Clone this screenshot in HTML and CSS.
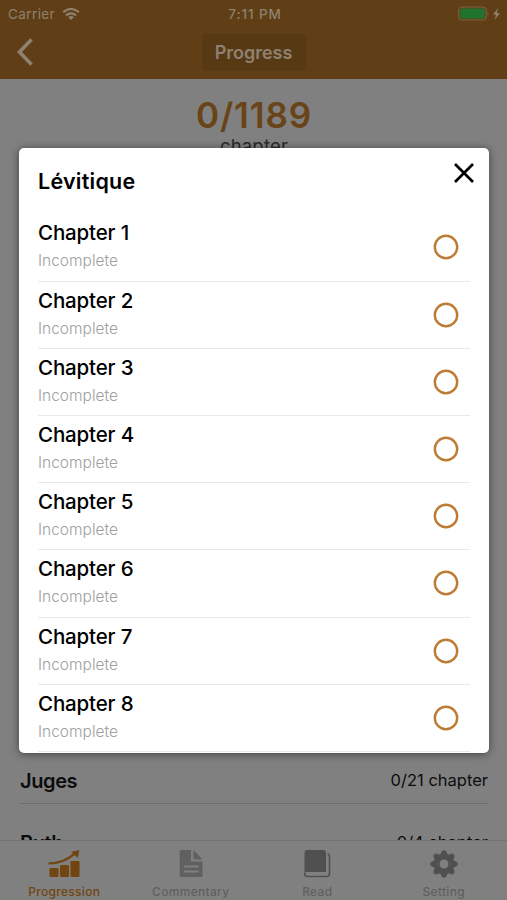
FILE: index.html
```html
<!DOCTYPE html>
<html lang="en">
<head>
<meta charset="utf-8">
<title>Progress</title>
<link rel="stylesheet" href="styles.css">
</head>
<body>
<div class="app">
  <header class="header">
    <div class="status">
      <div class="carrier"><span>Carrier</span>
        <svg width="18" height="14" viewBox="0 0 18 14" fill="none" stroke="currentColor" stroke-width="2.2"><path d="M1.2 5.2Q9-1.6 16.8 5.2M4 8.4q5-4.2 10 0"/><path d="M6.2 10.2q2.8-2.2 5.6 0L9 13z" fill="currentColor" stroke="none"/></svg>
      </div>
      <span class="clock">7:11 PM</span>
      <svg class="battery" width="44" height="16" viewBox="0 0 44 16"><rect x=".7" y="1" width="27.5" height="13" rx="3" fill="none" stroke="#7b6545"/><rect x="2.2" y="2.5" width="24.5" height="10" rx="1.5" fill="#20742f"/><path d="M29.5 5.5q2 2 0 4z" fill="#7b6545"/><path d="M40 2l-5 6.500h3l-1.200 5.200L42 6.900h-3.200z" fill="#8e8170"/></svg>
    </div>
    <div class="nav">
      <svg class="back" width="18" height="30" viewBox="0 0 18 30" fill="none" stroke="currentColor" stroke-width="3.6"><path d="M15.500 2.500L3.500 15l12 12.500"/></svg>
      <h1 class="nav-title">Progress</h1>
    </div>
  </header>
  <main class="page">
    <div class="total">0/1189</div>
    <div class="unit">chapter</div>
    <div class="books">
      <div class="book"><span class="book-name">Juges</span><span class="book-count">0/21 chapter</span></div>
      <div class="book"><span class="book-name">Ruth</span><span class="book-count">0/4 chapter</span></div>
    </div>
  </main>
  <nav class="tabs">
    <div class="tab active">
      <svg width="32" height="28" viewBox="0 0 32 28" fill="currentColor"><rect x="1.5" y="18" width="9" height="9" rx="1.2"/><rect x="12" y="15" width="9" height="12" rx="1.2"/><rect x="22.5" y="11" width="9" height="16" rx="1.2"/><path d="M.5 13.5Q15 13.5 26.5 3.8" fill="none" stroke="currentColor" stroke-width="2.2"/><path d="M23 2l8.300-2-1.500 8z"/></svg>
      <span>Progression</span>
    </div>
    <div class="tab">
      <svg width="24" height="28" viewBox="0 0 24 28"><path d="M1.700 0H12v11.500h11.500V26q0 1-1 1H1.700q-1 0-1-1V1q0-1 1-1z" fill="currentColor"/><path d="M14.500 0L23.500 9.500h-9z" fill="currentColor"/><path d="M5 16.500h14.500M5 21.500h14.500" stroke="#808080" stroke-width="2"/></svg>
      <span>Commentary</span>
    </div>
    <div class="tab dark">
      <svg width="28" height="28" viewBox="0 0 28 28"><path d="M4 0h16q3 0 3 3v19H4q-2.500 0-2.500 2V3q0-3 2.500-3z" fill="currentColor"/><path d="M24.500 4q2 0 2 2.500v17q0 3-3 3H4.500q-3 0-3-3.500" fill="none" stroke="currentColor" stroke-width="1.600"/></svg>
      <span>Read</span>
    </div>
    <div class="tab dark">
      <svg width="28" height="28" viewBox="-14 -14 28 28"><g fill="currentColor"><path id="cog" d="M-3.800-9l2-4.500h3.600l2 4.500v18l-2 4.500h-3.600l-2-4.500z"/><use href="#cog" transform="rotate(45)"/><use href="#cog" transform="rotate(90)"/><use href="#cog" transform="rotate(135)"/><circle r="10.500"/></g><circle r="4.500" fill="#808080"/></svg>
      <span>Setting</span>
    </div>
  </nav>
</div>
<section class="modal">
  <div class="modal-head">
    <h2>Lévitique</h2>
    <svg class="close" width="22" height="22" viewBox="0 0 22 22" fill="none" stroke="#000" stroke-width="2.700"><path d="M2 2l18 18M20 2L2 20"/></svg>
  </div>
  <ul class="chapters">
    <li><div><b>Chapter 1</b><small>Incomplete</small></div><svg class="ring" viewBox="0 0 26 26"><circle cx="13" cy="13" r="11.200"/></svg></li>
    <li><div><b>Chapter 2</b><small>Incomplete</small></div><svg class="ring" viewBox="0 0 26 26"><circle cx="13" cy="13" r="11.200"/></svg></li>
    <li><div><b>Chapter 3</b><small>Incomplete</small></div><svg class="ring" viewBox="0 0 26 26"><circle cx="13" cy="13" r="11.200"/></svg></li>
    <li><div><b>Chapter 4</b><small>Incomplete</small></div><svg class="ring" viewBox="0 0 26 26"><circle cx="13" cy="13" r="11.200"/></svg></li>
    <li><div><b>Chapter 5</b><small>Incomplete</small></div><svg class="ring" viewBox="0 0 26 26"><circle cx="13" cy="13" r="11.200"/></svg></li>
    <li><div><b>Chapter 6</b><small>Incomplete</small></div><svg class="ring" viewBox="0 0 26 26"><circle cx="13" cy="13" r="11.200"/></svg></li>
    <li><div><b>Chapter 7</b><small>Incomplete</small></div><svg class="ring" viewBox="0 0 26 26"><circle cx="13" cy="13" r="11.200"/></svg></li>
    <li><div><b>Chapter 8</b><small>Incomplete</small></div><svg class="ring" viewBox="0 0 26 26"><circle cx="13" cy="13" r="11.200"/></svg></li>
  </ul>
</section>
</body>
</html>
```

FILE: styles.css
```css
* { box-sizing: border-box; }
body { margin: 0; font-family: Inter, "Liberation Sans", sans-serif; color: #0c0c0c; overflow: hidden; }
h1, h2, ul { margin: 0; padding: 0; }
svg { display: block; flex: none; }

.app { height: 900px; display: flex; flex-direction: column; background: #808080; }

.header { height: 79px; flex: none; background: #603f16; color: #8e8170; }
.status { height: 28px; display: grid; grid-template-columns: 1fr auto 1fr; align-items: center; padding: 0 5px 0 8px; font-size: 13.5px; }
.carrier { display: flex; align-items: center; gap: 7px; letter-spacing: .4px; }
.clock { font-weight: 500; font-size: 13.5px; letter-spacing: .9px; }
.battery { justify-self: end; }
.nav { height: 51px; display: grid; grid-template-columns: 1fr 104px 1fr; padding: 6px 0 0; }
.back { margin: 3px 0 0 16px; height: 30px; }
.nav-title { height: 37px; line-height: 37px; border-radius: 4px; background: #573913; text-align: center; font-size: 18px; font-weight: 600; }

.page { flex: 1; min-height: 0; overflow: hidden; display: flex; flex-direction: column; padding: 0 19px 0 20px; }
.total { margin-top: 15px; line-height: 42px; text-align: center; font-size: 35px; font-weight: 600; letter-spacing: .9px; color: #694419; }
.unit { line-height: 20px; text-align: center; font-size: 18.5px; letter-spacing: .2px; color: #292929; }
.books { margin-top: 586px; }
.book { height: 62px; padding-top: 27px; display: flex; justify-content: space-between; line-height: 24px; border-bottom: 1px solid #6d6d6d; }
.book-name { font-size: 20px; font-weight: 600; letter-spacing: -.4px; }
.book-count { font-size: 16.5px; line-height: 22px; }

.tabs { height: 60px; flex: none; display: grid; grid-template-columns: repeat(4, 1fr); border-top: 1px solid #747474; background: #808080; padding-left: 1px; }
.tab { display: flex; flex-direction: column; align-items: center; padding-top: 9px; gap: 5px; color: #606060; font-size: 12px; font-weight: 500; line-height: 17px; letter-spacing: .3px; }
.tab.active { color: #70450f; }
.tab.dark svg { color: #505050; }

.modal { position: absolute; left: 19px; top: 148px; width: 470px; height: 605px; padding: 0 19px; background: #fff; border-radius: 5px; overflow: hidden; box-shadow: 0 1px 9px rgba(0, 0, 0, .5); }
.modal-head { height: 66.4px; display: flex; justify-content: space-between; padding: 14px 0 0; }
h2 { font-size: 21.5px; line-height: 38px; font-weight: 600; letter-spacing: .25px; color: #000; }
.close { margin-right: -5px; }
.chapters { list-style: none; }
.chapters li { height: 67.2px; border-bottom: 1px solid #e9e9e9; display: flex; justify-content: space-between; padding: 5px 11px 0 0; }
.chapters b { display: block; font-size: 20.5px; line-height: 28px; font-weight: 500; letter-spacing: -.15px; color: #000; }
.chapters small { display: block; font-size: 15.5px; line-height: 27px; font-weight: 300; color: #a0a0a0; }
.ring { width: 26px; height: 26px; margin-top: 15px; fill: none; stroke: #bd7c34; stroke-width: 2.4; }
```
